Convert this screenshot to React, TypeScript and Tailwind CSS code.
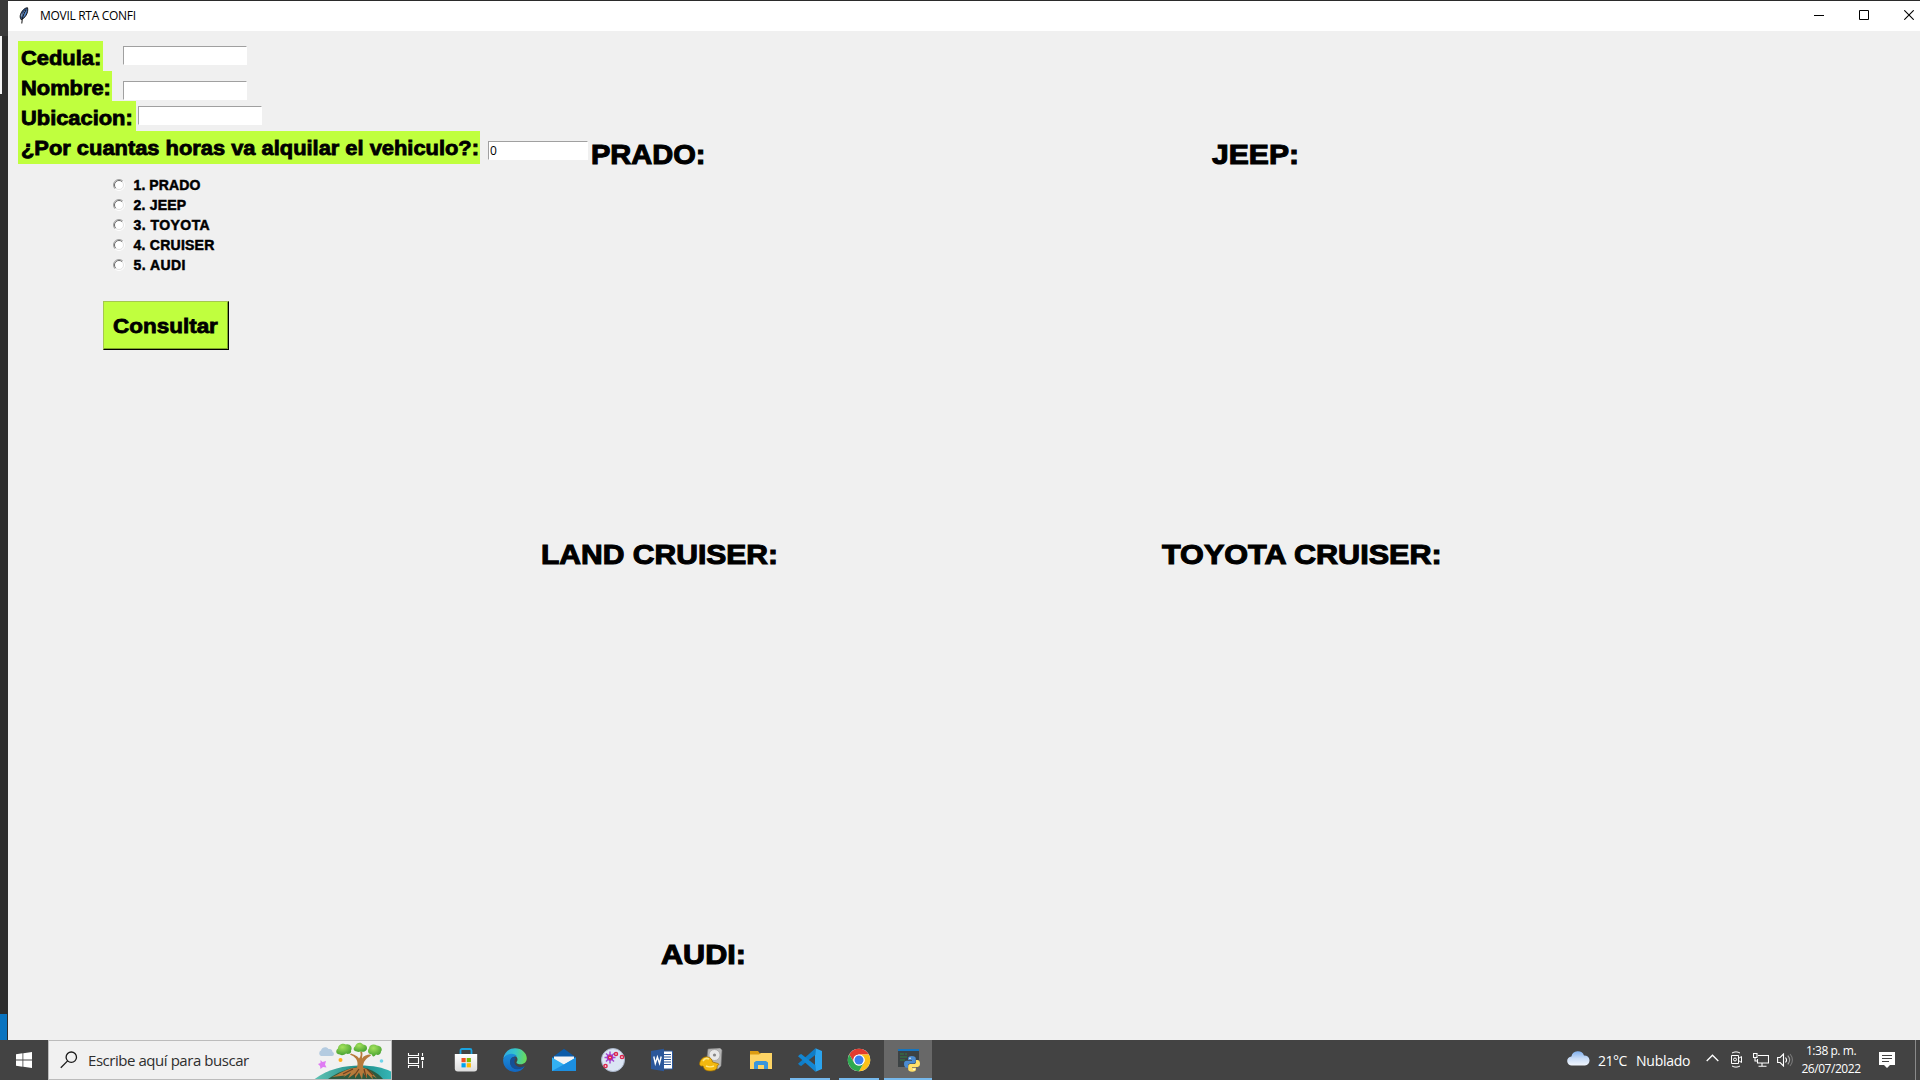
import React from 'react';

const ARIAL = "font-['Liberation_Sans',sans-serif] font-bold text-black whitespace-pre";
const UI = "font-['Open_Sans',sans-serif] whitespace-pre";

function Label({ text, className }: { text: string; className: string }) {
  return (
    <div className={`${ARIAL} shrink-0 bg-[#c0ff3e] pl-[3px] text-[20px] leading-[34px] [-webkit-text-stroke:0.8px_black] overflow-hidden ${className}`}>
      <span className="inline-block origin-left scale-x-[1.093]">{text}</span>
    </div>
  );
}

function Entry({ value = '', className }: { value?: string; className: string }) {
  return (
    <input
      defaultValue={value}
      className={`h-[19px] shrink-0 rounded-none border border-t-[#a0a0a0] border-l-[#a0a0a0] border-r-white border-b-white bg-white px-px font-['Open_Sans',sans-serif] text-[12px] leading-[17px] tracking-tight text-black outline-none ${className}`}
    />
  );
}

function Heading({ text, className, scale }: { text: string; className: string; scale: string }) {
  return (
    <h2 className={`${ARIAL} shrink-0 text-[28px] leading-[32px] [-webkit-text-stroke:1.1px_black] ${className}`}>
      <span className={`inline-block origin-left ${scale}`}>{text}</span>
    </h2>
  );
}

function Radio({ text, className }: { text: string; className: string }) {
  return (
    <label className="flex h-5 items-center">
      <svg width="12" height="12" viewBox="0 0 12 12" className="mr-[8.5px]">
        <circle cx="6" cy="6" r="5" fill="#fff" />
        <path d="M2.1 9.9A5.5 5.5 0 0 1 9.9 2.1" fill="none" stroke="#a0a0a0" />
        <path d="M2.8 9.2A4.5 4.5 0 0 1 9.2 2.8" fill="none" stroke="#696969" />
        <path d="M9.9 2.1A5.5 5.5 0 0 1 2.1 9.9" fill="none" stroke="#fff" />
        <path d="M9.2 2.8A4.5 4.5 0 0 1 2.8 9.2" fill="none" stroke="#e3e3e3" />
      </svg>
      <span className={`${ARIAL} text-[14px] leading-5 [-webkit-text-stroke:0.5px_black] ${className}`}>{text}</span>
    </label>
  );
}

function Feather() {
  return (
    <svg width="10" height="17" viewBox="0 0 10 17">
      <path d="M8.6.8C6 .6 3 3.4 1.6 7.2c-.7 2-.6 4 .6 5.5C6 11.200 9.600 6 8.600.8Z" fill="#2d4a77" stroke="#111" strokeWidth=".9" />
      <path d="M7.800 2.200C5.600 4 3.600 8 3 11.500 6 9.500 8 5.500 7.800 2.200Z" fill="#5b93dd" />
      <path d="M6 4 4.500 7M3 6.500l-.4 3" stroke="#b9cfe8" strokeWidth=".8" />
      <path d="M7 3C4.500 7 3 11 2.800 16.500" stroke="#111" strokeWidth="1" fill="none" />
    </svg>
  );
}

function TitleBar() {
  return (
    <header className="flex h-[31px] items-center border-t border-[#2b2b2b] bg-white pb-px pl-[11px]">
      <Feather />
      <span className={`${UI} ml-[11px] text-[12px] leading-[30px] tracking-[-0.3px] text-black`}>MOVIL RTA CONFI</span>
      <div className="mb-px ml-auto flex items-center gap-[35px] pr-[6px]">
        <svg width="10" height="10" viewBox="0 0 10 10"><path d="M0 5.500h10" stroke="#000" /></svg>
        <svg width="10" height="10" viewBox="0 0 10 10"><path d="M.5.5h9v9h-9z" stroke="#000" fill="none" /></svg>
        <svg width="10" height="10" viewBox="0 0 10 10"><path d="M.3.3l9.400 9.400M9.700.3l-9.400 9.400" stroke="#000" strokeWidth="1.100" /></svg>
      </div>
    </header>
  );
}

function RentalForm() {
  return (
    <form className="w-[580px] shrink-0 pt-[10px] pl-[10px]">
      <div className="flex h-[30px] items-start">
        <Label text="Cedula:" className="h-[30px] w-[85px]" />
        <Entry className="mt-[5px] ml-5 w-[124px]" />
      </div>
      <div className="flex h-[30px] items-start">
        <Label text="Nombre:" className="h-[30px] w-[94px]" />
        <Entry className="mt-[10px] ml-[11px] w-[124px]" />
      </div>
      <div className="flex h-[30px] items-start">
        <Label text="Ubicacion:" className="h-[30px] w-[118px]" />
        <Entry className="mt-[5px] ml-[2px] w-[124px]" />
      </div>
      <div className="flex h-[33px] items-start">
        <Label text="¿Por cuantas horas va alquilar el vehiculo?:" className="h-[33px] w-[462px]" />
        <Entry value="0" className="mt-[10px] ml-[8px] w-[100px]" />
      </div>
      <div className="mt-[11px] ml-[95px] flex flex-col">
        <Radio text="1. PRADO" className="tracking-[0.1px]" />
        <Radio text="2. JEEP" className="tracking-[0.2px]" />
        <Radio text="3. TOYOTA" className="tracking-[0.45px]" />
        <Radio text="4. CRUISER" className="tracking-[0.25px]" />
        <Radio text="5. AUDI" className="tracking-[0.45px]" />
      </div>
      <button
        type="button"
        className={`${ARIAL} mt-[26px] ml-[85px] flex h-[49px] w-[126px] items-center border-t border-l border-r border-b border-t-[#a5c84f] border-l-[#a5c84f] border-r-black border-b-black bg-[#c0ff3e] pl-[9px] text-[21px] shadow-[inset_-1px_-1px_0_#7fa52c] [-webkit-text-stroke:0.8px_black]`}
      >
        <span className="inline-block origin-left scale-x-[1.07]">Consultar</span>
      </button>
    </form>
  );
}

const Cloud = () => (
  <svg width="23" height="16" viewBox="0 0 23 16">
    <defs><linearGradient id="cl" x1="0" y1="0" x2="0" y2="1"><stop offset="0" stopColor="#7fb0ee" /><stop offset=".5" stopColor="#c9dcf6" /><stop offset="1" stopColor="#f2f6fd" /></linearGradient></defs>
    <path d="M5 15.500a4.500 4.500 0 0 1-.6-9A6.600 6.600 0 0 1 17 5.500a5 5 0 0 1 1 10Z" fill="url(#cl)" />
  </svg>
);

const TreeArt = () => (
  <svg width="77" height="38" viewBox="0 0 77 38" className="self-end">
    <defs>
      <linearGradient id="hill" x1="0" y1="0" x2="1" y2="0"><stop offset="0" stopColor="#5fc3b4" /><stop offset=".6" stopColor="#1f8a86" /><stop offset="1" stopColor="#35b5b5" /></linearGradient>
      <radialGradient id="leaf" cx=".4" cy=".3" r=".8"><stop offset="0" stopColor="#a4e25c" /><stop offset="1" stopColor="#3c9a2c" /></radialGradient>
    </defs>
    <path d="M0 38.500C14 28 30 24.500 46 24.500c13 0 23 2 31 6V38.500Z" fill="url(#hill)" />
    <path d="M14 38c9-6 19-11 31-12 10 1 18 5 24 12Z" fill="#2d5a3f" />
    <path d="M18 36c8-3 13-8 22-9l3-.5c1.500-6 0-10-7-13l1-1c5 2 7 3 8 5 2-2 2-5 1-7h2c1 3 0 5 0 7 2-3 5-4 8-4l1 1c-5 3-8 6-8 12 6 2 10 6 14 11l-5-3 1 4-6-6v5l-4-6-1 7-3-7-4 6v-5l-7 5 3-6-8 5 2-2Z" fill="#b77a3b" />
    <path d="M29 33l10-5M40 35l5-7M52 36l-2-8M59 34l-6-6" stroke="#6b3f1e" strokeWidth="1.200" />
    <g fill="url(#leaf)" transform="translate(1 1.500)">
      <path d="M25 12c-4 0-5-4-2-6 0-4 5-6 8-4 4-1 7 3 5 6 1 3-3 4-5 3-2 2-5 2-6 1Z" />
      <path d="M42 9c-4 0-4-4-2-5 1-4 6-5 8-2 4 0 5 4 3 6-2 2-4 1-5 1s-3 1-4 0Z" />
      <path d="M57 12c-4 0-5-4-3-6 0-4 5-5 8-3 4 0 6 4 4 6 0 3-3 4-5 3-2 3-4 2-4 0Z" />
    </g>
    <path d="M7 15a3 3 0 0 1 0-5.500c1-4 6-4 7.500-1.500 3-.5 4 1.500 4 3 2 0 2 4-.5 4Z" fill="#b4cbe0" />
    <path d="M6.500 19l2 2 3.500-1-1 3.500 1.500 3-3.500-.5-2.500 2-.5-3-2-2 2.500-1Z" fill="#df7bf3" />
    <circle cx="26.500" cy="19" r="2" fill="#ffae1a" />
    <circle cx="67.500" cy="20" r="1.800" fill="#6fd3ea" />
  </svg>
);

const TaskView = () => (
  <svg width="18" height="17" viewBox="0 0 18 17" fill="none" stroke="#fff" strokeWidth="1.100">
    <path d="M1.500 1v2.500h10V1M1.500 16v-2.500h10V16M1.500 5.500h10v6h-10zM15.500 1v3M15.500 9v7" />
    <path d="M14 5h3v3h-3z" fill="#fff" stroke="none" />
  </svg>
);

const Store = () => (
  <svg width="24" height="24" viewBox="0 0 24 24">
    <defs><linearGradient id="st" x1="0" y1="0" x2="0" y2="1"><stop offset="0" stopColor="#fff" /><stop offset="1" stopColor="#dcdcdc" /></linearGradient></defs>
    <path d="M.8 6h22.400v14.500a3 3 0 0 1-3 3H3.800a3 3 0 0 1-3-3Z" fill="url(#st)" />
    <path d="M6.500 6V2.500a1.500 1.500 0 0 1 1.500-1.500h8a1.500 1.500 0 0 1 1.500 1.500V6" fill="none" stroke="#1ba3e0" strokeWidth="1.800" />
    <path d="M7.500 10h4.200v4.200H7.500z" fill="#f25022" /><path d="M12.700 10h4.200v4.200h-4.200z" fill="#7fba00" />
    <path d="M7.500 15.200h4.200v4.200H7.500z" fill="#00a4ef" /><path d="M12.700 15.200h4.200v4.200h-4.200z" fill="#ffb900" />
  </svg>
);

const Edge = () => (
  <svg width="24" height="24" viewBox="0 0 24 24">
    <defs>
      <linearGradient id="e1" x1="0" y1=".3" x2="1" y2=".4"><stop offset="0" stopColor="#2fa9e6" /><stop offset=".5" stopColor="#36c6c9" /><stop offset="1" stopColor="#6bdc57" /></linearGradient>
      <linearGradient id="e2" x1="0" y1="0" x2="0" y2="1"><stop offset="0" stopColor="#1c8fdb" /><stop offset="1" stopColor="#1266c0" /></linearGradient>
    </defs>
    <path d="M.3 10.500C1.200 4.500 6 .2 12 .2c7 0 11.800 5 11.800 10 0 3.800-2.800 6-6 6-2.600 0-4.600-1-4.300-2 .2-.6 1-1 1-2.700 0-2.400-2.300-4.500-6-4.500-4 0-7 2-8.200 3.500Z" fill="url(#e1)" />
    <path d="M.2 11c1.500-3.500 4.800-5.200 8.300-5.200 2.500 0 4.500 1 5.500 2.700-4-.7-6.700 1.800-6.700 5.500 0 4.500 4 8.500 10 6.500 2-.6 3.300-1.500 4.500-2.500-2 4-5.500 5.900-9.600 5.900C4.500 23.900-.5 18 .2 11Z" fill="url(#e2)" />
    <path d="M9 9.500c-3 2.500-2.500 8 1 10.500 3.800 2.700 9 1 11.800-2-5.300 2.500-9.800 0-10.300-3.500-.2-2 .6-3.500 1.500-4.500-1-.8-2.800-1-4-.5Z" fill="#154f96" />
  </svg>
);

const Mail = () => (
  <svg width="24" height="24" viewBox="0 0 24 24">
    <path d="M0 9.500 12 .8l12 8.700V15H0Z" fill="#0c5ba8" />
    <path d="M2 8.500h20V17H2Z" fill="#f4f4f4" />
    <path d="M0 9.500 12 16.500l12-7V23H0Z" fill="#33b1f2" />
    <path d="M0 23 14.500 15 24 9.500V23Z" fill="#1c8fe0" />
  </svg>
);

const Splat = () => (
  <svg width="24" height="24" viewBox="0 0 24 24">
    <circle cx="12" cy="12" r="11.500" fill="#dbe5f4" stroke="#a9b5c9" />
    <path d="M9 3.500v12M3.500 9.500h11M5 5.500l8 8M13 5.500l-8 8" stroke="#a548cf" strokeWidth="1.500" />
    <circle cx="9" cy="9.500" r="3.300" fill="#a233cf" />
    <g fill="#fff" stroke="#d8284f" strokeWidth="1.500"><circle cx="9" cy="9.500" r="1.500" /><circle cx="15" cy="6" r="1.500" /><circle cx="21" cy="9" r="1.600" /><circle cx="4.500" cy="18" r="1.600" /></g>
  </svg>
);

const Word = () => (
  <svg width="24" height="24" viewBox="0 0 24 24">
    <path d="M12 3h10.500v18H12Z" fill="#fff" stroke="#2b579a" />
    <path d="M14 6.500h7M14 9h7M14 11.500h7M14 14h7M14 16.500h7" stroke="#2b579a" strokeWidth="1.100" />
    <path d="M1 3 14 .8v22.400L1 21Z" fill="#2b579a" />
    <path d="m3.800 8.500 1.500 7L7.400 9l2.100 6.500 1.700-7" fill="none" stroke="#fff" strokeWidth="1.400" />
  </svg>
);

const DiskTool = () => (
  <svg width="24" height="24" viewBox="0 0 24 24">
    <path d="m9 1 12-1 2 2-1 16-3 3-12-3Z" fill="#b8b8b8" stroke="#777" strokeWidth=".6" />
    <circle cx="15.500" cy="7" r="5.500" fill="#e8e8e8" stroke="#999" strokeWidth=".6" /><circle cx="15.500" cy="7" r="1.600" fill="#888" />
    <path d="M.5 16C1 11 5 8 9 9c3 .8 4 2.500 4.500 5l5.500 1.500c1.500.5.500 2-1 2.300 1 3.200-2 5.200-6 5.200-6 0-7-2-8-5-2 .5-3.700-.5-3.500-2Z" fill="#f3b80f" stroke="#9a6a00" strokeWidth=".7" />
    <path d="M4 13c1.500-2.500 4-3 6-2M7 18c2 1 6 1 8 0" stroke="#ffe884" strokeWidth="1.500" fill="none" />
  </svg>
);

const Folder = () => (
  <svg width="24" height="24" viewBox="0 0 24 24">
    <path d="M1 3h8l2 2.500h11.500V12H1Z" fill="#dc9c12" />
    <path d="M1 6.500h9L12 5h11v16H1Z" fill="#fdd465" />
    <path d="M5 21v-6.500L7 13h10l2 1.500V21h-4v-4H9v4Z" fill="#3a96dc" />
  </svg>
);

const Code = () => (
  <svg width="24" height="24" viewBox="0 0 24 24">
    <path d="M17.500.2 24 3v18l-6.500 2.800L17 18V6Z" fill="#2ba4ee" />
    <path d="M17.500.2v6.600L3.200 18 1.500 17.300 0 15.700Z" fill="#0f7ec8" />
    <path d="M17.500 23.800v-6.600L3.200 6 1.500 6.700 0 8.300Z" fill="#1387d3" />
  </svg>
);

const Chrome = () => (
  <svg width="24" height="24" viewBox="0 0 24 24">
    <circle cx="12" cy="12" r="11.200" fill="#fff" />
    <path d="M2.300 6.400A11.200 11.200 0 0 1 21.700 6.400H12A5.600 5.600 0 0 0 7.150 14.800Z" fill="#e33b2e" />
    <path d="M21.700 6.400A11.200 11.200 0 0 1 12 23.200L16.850 14.800A5.600 5.600 0 0 0 12 6.400Z" fill="#fbc116" />
    <path d="M2.300 6.400A11.200 11.200 0 0 0 12 23.200L16.850 14.800A5.600 5.600 0 0 1 7.150 14.800Z" fill="#2da94f" />
    <circle cx="12" cy="12" r="5.600" fill="#fff" /><circle cx="12" cy="12" r="4.500" fill="#3b7ded" />
  </svg>
);

const Python = () => (
  <svg width="24" height="24" viewBox="0 0 24 24">
    <path d="M2 1h21v18H2Z" fill="#3c4244" /><path d="M2 1h21v2H2Z" fill="#1674bd" />
    <path d="M4 6h4M9 6h2M4 9h7M4 12h5" stroke="#356b43" strokeWidth="1.300" />
    <g transform="translate(8 8)">
      <path d="M7.800 0C5 0 4 1 4 2.500V4h4v.8H2.500C1 4.800 0 6 0 8s1 3.700 2.500 3.700H4V9.800C4 8.500 5 7.600 6.300 7.600h3.500c1.100 0 2-.9 2-2V2.500C11.800 1 10.500 0 7.800 0Z" fill="#4b8bd0" />
      <path d="M8.200 15.700c2.800 0 3.800-1 3.800-2.500v-1.500H8v-.8h5.500c1.500 0 2.500-1.200 2.500-3.200s-1-3.700-2.500-3.700H12v1.900c0 1.300-1 2.200-2.300 2.200H6.200c-1.100 0-2 .9-2 2v3.100c0 1.500 1.300 2.500 4 2.500Z" fill="#ffe06a" />
      <circle cx="6" cy="2.300" r=".8" fill="#fff" /><circle cx="10" cy="13.400" r=".8" fill="#fff" />
    </g>
  </svg>
);

const APPS = [
  { name: 'store', icon: <Store />, state: 'idle' },
  { name: 'edge', icon: <Edge />, state: 'idle' },
  { name: 'mail', icon: <Mail />, state: 'idle' },
  { name: 'splat', icon: <Splat />, state: 'idle' },
  { name: 'word', icon: <Word />, state: 'idle' },
  { name: 'disk', icon: <DiskTool />, state: 'idle' },
  { name: 'folder', icon: <Folder />, state: 'idle' },
  { name: 'code', icon: <Code />, state: 'open' },
  { name: 'chrome', icon: <Chrome />, state: 'open' },
  { name: 'python', icon: <Python />, state: 'active' },
];

function Taskbar() {
  return (
    <footer className="flex h-10 bg-[#434343] text-white">
      <div className="flex w-12 items-center justify-center">
        <svg width="16" height="16" viewBox="0 0 16 16" fill="#fff">
          <path d="M0 2.300 6.500 1.300v6.200H0ZM7.300 1.200 16 0v7.500H7.300ZM0 8.400h6.500v6.300L0 13.800ZM7.300 8.400H16V16l-8.700-1.200Z" />
        </svg>
      </div>
      <div className="flex w-[344px] items-center overflow-hidden border border-[#bcbcbc] bg-[#f1f1f1] pl-[11px]">
        <svg width="18" height="18" viewBox="0 0 18 18" fill="none" stroke="#1a1a1a" strokeWidth="1.300">
          <circle cx="11.300" cy="6.200" r="5.200" /><path d="M7.600 9.900.8 16.700" />
        </svg>
        <span className={`${UI} ml-[10px] text-[15px] tracking-[-0.45px] text-[#2e2e2e]`}>Escribe aquí para buscar</span>
        <div className="ml-auto flex self-stretch"><TreeArt /></div>
      </div>
      <div className="mr-[2px] flex w-12 items-center justify-center"><TaskView /></div>
      <div className="flex gap-[1.100px]">
        {APPS.map((a) => (
          <div key={a.name} className={`flex w-12 flex-col items-center ${a.state === 'active' ? 'bg-[#686868]' : ''}`}>
            <div className="flex h-[38px] items-center pt-[2px]">{a.icon}</div>
            {a.state !== 'idle' && <div className={`h-[2px] bg-[#76b9ed] ${a.state === 'active' ? 'w-12' : 'w-10'}`} />}
          </div>
        ))}
      </div>
      <div className={`${UI} ml-auto flex items-center`}>
        <div className="-mt-1"><Cloud /></div>
        <span className="ml-[8px] w-[38px] text-[14px] tracking-[-0.5px]">21°C</span>
        <span className="w-[70px] text-[14px] tracking-[-0.25px]">Nublado</span>
        <svg width="13" height="8" viewBox="0 0 13 8" fill="none" stroke="#fff" strokeWidth="1.300" className="-mt-1"><path d="m.7 7 5.800-5.800L12.300 7" /></svg>
        <svg width="13" height="17" viewBox="0 0 13 17" fill="none" stroke="#fff" strokeWidth="1" className="ml-[11px] -mt-[2px]">
          <path d="M2 2c2.500-1.500 5.500-1.500 8 0M2 15c2.500 1.500 5.500 1.500 8 0M1.500 4.500h7v8h-7zM8.500 7.500l3-2v6l-3-2" /><circle cx="5" cy="8.500" r="1.500" />
        </svg>
        <svg width="16" height="14" viewBox="0 0 16 14" fill="none" stroke="#fff" strokeWidth="1.100" className="ml-[10px]">
          <path d="M5 2.500h10.500v7.500h-11V6M9 10v3M5.500 13.200h8M.5.5h3.500v4H.5zM2 4.500V8h2.500" />
        </svg>
        <svg width="17" height="14" viewBox="0 0 17 14" fill="none" stroke="#fff" strokeWidth="1.100" className="ml-[8px]">
          <path d="M.6 4.500h2.500L6.500 1v12L3.100 9.500H.6Z" /><path d="M8.500 4.500c1.300 1.500 1.300 3.500 0 5" /><path d="M10.800 2.700c2.200 2.500 2.200 6 0 8.600" stroke="#aaa" /><path d="M13 1c3.200 3.500 3.200 8.500 0 12" stroke="#7b7b7b" />
        </svg>
        <div className="ml-[7px] flex w-[60px] flex-col items-center text-[12px] leading-[18px] tracking-[-0.45px]">
          <span>1:38 p. m.</span>
          <span>26/07/2022</span>
        </div>
        <svg width="16" height="16" viewBox="0 0 16 16" className="ml-[18px]">
          <path d="M0 0h16v13h-5l-3 3-3-3H0Z" fill="#fff" /><path d="M3 3.500h10M3 6.500h10M3 9.500h7" stroke="#434343" />
        </svg>
        <div className="ml-[20px] h-10 w-px bg-[#8a8a8a]" />
        <div className="w-1" />
      </div>
    </footer>
  );
}

export default function App() {
  return (
    <div className="flex h-[1080px] w-[1920px] flex-col overflow-hidden bg-[#2d2d2d]">
      <div className="flex h-[1040px]">
        <div className="flex w-2 flex-col justify-between">
          <div className="flex flex-col">
            <div className="h-9 bg-[#3a3a3a]" />
            <div className="h-[58px] w-[2px] bg-[#f3f3f3]" />
          </div>
          <div className="h-[26px] w-[7px] bg-[#0a74c0]" />
        </div>
        <div className="flex flex-1 flex-col bg-[#f0f0f0]">
          <TitleBar />
          <div className="flex h-[501px]">
            <RentalForm />
            <div className="flex pt-[108px] pl-[3px]">
              <Heading text="PRADO:" className="w-[621px]" scale="scale-x-[1.037]" />
              <Heading text="JEEP:" className="" scale="scale-x-[1.075]" />
            </div>
          </div>
          <div className="flex h-[400px] pt-[7px] pl-[533px]">
            <Heading text="LAND CRUISER:" className="w-[621px]" scale="scale-x-[1.073]" />
            <Heading text="TOYOTA CRUISER:" className="" scale="scale-x-[1.092]" />
          </div>
          <div className="flex pt-[7px] pl-[653px]">
            <Heading text="AUDI:" className="" scale="scale-x-[1.092]" />
          </div>
        </div>
      </div>
      <Taskbar />
    </div>
  );
}
